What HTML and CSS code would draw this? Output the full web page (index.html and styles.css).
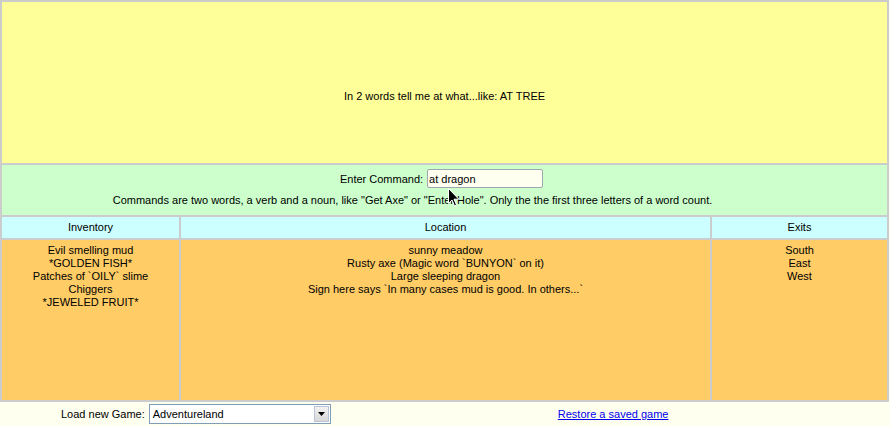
FILE: index.html
```html
<!DOCTYPE html>
<html>
<head>
<meta charset="utf-8">
<link rel="stylesheet" href="styles.css">
</head>
<body>
<table class="game">
  <tr>
    <td colspan="3" class="message"><div class="msg-text">In 2 words tell me at what...like: AT TREE</div></td>
  </tr>
  <tr>
    <td colspan="3" class="command">
      <div class="cmd-row"><label class="cmd-label">Enter Command:</label> <span class="input-wrap"><input class="cmd-input" type="text" value="at dragon"><svg class="pointer" width="12" height="19" viewBox="0 0 12 19"><path d="M0.5 0.5 L0.5 15.5 L4 12 L6.5 18 L8.5 17 L6 11.2 L10.8 11.2 Z" fill="#000" stroke="#fff" stroke-width="1"/></svg></span></div>
      <div class="cmd-help">Commands are two words, a verb and a noun, like "Get Axe" or "Enter Hole". Only the the first three letters of a word count.</div>
    </td>
  </tr>
  <tr class="heads">
    <td class="col-inv">Inventory</td>
    <td class="col-loc">Location</td>
    <td class="col-exit">Exits</td>
  </tr>
  <tr class="body">
    <td>Evil smelling mud<br>*GOLDEN FISH*<br>Patches of `OILY` slime<br>Chiggers<br>*JEWELED FRUIT*</td>
    <td>sunny meadow<br>Rusty axe (Magic word `BUNYON` on it)<br>Large sleeping dragon<br>Sign here says `In many cases mud is good. In others...`</td>
    <td>South<br>East<br>West</td>
  </tr>
</table>
<div class="footer">
  <div class="load">
    <span class="load-label">Load new Game:</span>
    <span class="select"><span class="select-text">Adventureland</span><span class="select-btn"><svg width="7" height="4" viewBox="0 0 7 4"><path d="M0 0 H7 L3.5 4 Z" fill="#000"/></svg></span></span>
  </div>
  <a class="restore" href="#">Restore a saved game</a>
</div>
</body>
</html>
```
FILE: styles.css
```css
html, body {
  margin: 0;
  padding: 0;
  background: #fffff0;
  font-family: "Liberation Sans", Arial, sans-serif;
  font-size: 11px;
  color: #000;
}
.game {
  width: 889px;
  border-collapse: separate;
  border-spacing: 2px;
  background: #cccccc;
}
.game td {
  padding: 0;
  text-align: center;
  line-height: 13px;
}
.message {
  background: #ffff99;
  height: 161px;
  vertical-align: top;
}
.msg-text {
  padding-top: 88px;
}
.command {
  background: #ccffcc;
  height: 50px;
  vertical-align: top;
}
.cmd-row {
  display: flex;
  justify-content: center;
  align-items: center;
  gap: 4px;
  padding-top: 4px;
  height: 19px;
  padding-right: 6px;
}
.cmd-label {
  padding-top: 2px;
}
.input-wrap {
  position: relative;
  display: inline-block;
}
.cmd-input {
  box-sizing: border-box;
  width: 116px;
  height: 19px;
  margin: 0;
  padding: 0 1px;
  border: 1px solid #9fa6ae;
  border-radius: 2px;
  background: #fffff0;
  font-family: "Liberation Sans", Arial, sans-serif;
  font-size: 11px;
  color: #000;
}
.pointer {
  position: absolute;
  left: 21px;
  top: 19px;
}
.cmd-help {
  padding-top: 6px;
  padding-right: 64px;
}
.heads td {
  background: #ccffff;
  height: 21px;
  vertical-align: middle;
}
.col-inv { width: 177px; }
.col-exit { width: 175px; }
.body td {
  background: #ffcc66;
  height: 156px;
  vertical-align: top;
  padding-top: 4px;
}
.footer {
  display: flex;
  align-items: center;
  height: 23px;
}
.load {
  display: flex;
  align-items: center;
  gap: 4px;
  padding-left: 61px;
}
.select {
  box-sizing: border-box;
  width: 182px;
  height: 20px;
  border: 1px solid #7f9db9;
  background: #fff;
  display: flex;
  align-items: center;
  justify-content: space-between;
}
.select-text {
  padding-left: 3px;
}
.select-btn {
  width: 15px;
  height: 16px;
  margin-right: 1px;
  background: linear-gradient(#f2f2f2, #d8d8d8);
  border: 1px solid #b9c4d4;
  box-sizing: border-box;
  display: flex;
  align-items: center;
  justify-content: center;
}
.restore {
  margin-left: 227px;
  color: #0000ee;
  text-decoration: underline;
}
```
